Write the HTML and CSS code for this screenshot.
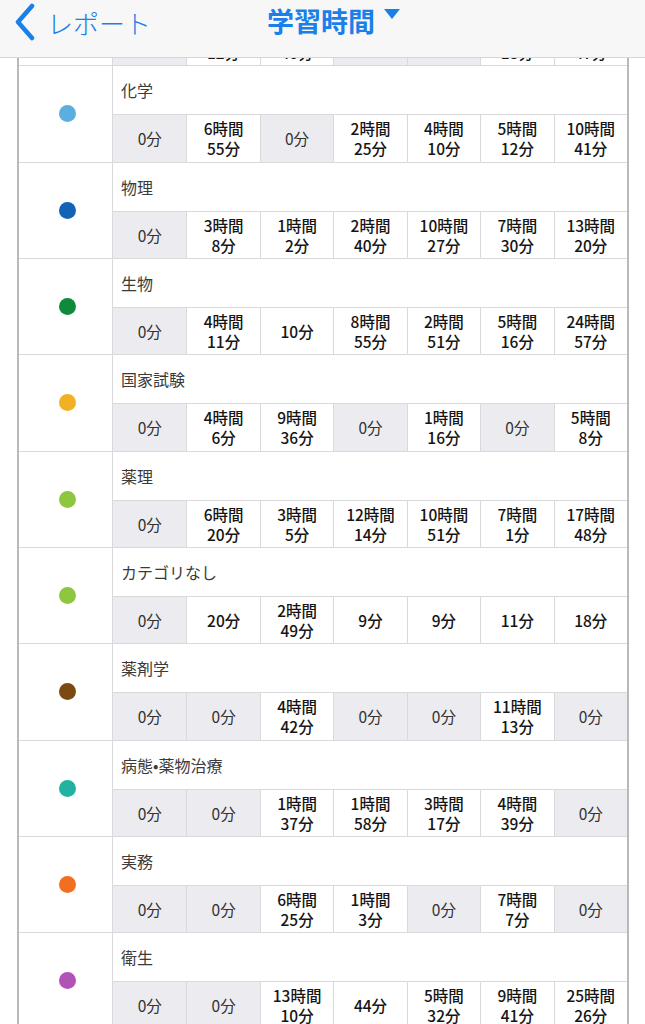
FILE: index.html
```html
<!DOCTYPE html>
<html lang="ja">
<head>
<meta charset="UTF-8" />
<meta name="viewport" content="width=device-width, initial-scale=1" />
<title>学習時間</title>
<link rel="stylesheet" href="styles.css">
</head>
<body>
  <header class="nav">
    <a class="back" href="#">
      <svg class="chevron" viewBox="0 0 22 38" width="22" height="38"><path d="M18 3 L4 19 L18 35" fill="none" stroke="#1a7fe8" stroke-width="4.5" stroke-linecap="round" stroke-linejoin="round"/></svg>
      <span>レポート</span>
    </a>
    <div class="title">学習時間<span class="caret"></span></div>
  </header>

  <div class="report">

    <!-- row scrolled up under the bar -->
    <div class="subject">
      <div class="swatch"></div>
      <div class="detail">
        <div class="name"></div>
        <div class="cells">
          <div class="cell zero"></div>
          <div class="cell">3時間<br>12分</div>
          <div class="cell">1時間<br>40分</div>
          <div class="cell zero"></div>
          <div class="cell zero"></div>
          <div class="cell">2時間<br>18分</div>
          <div class="cell">6時間<br>47分</div>
        </div>
      </div>
    </div>

    <div class="subject">
      <div class="swatch"><span class="dot" style="background:#5aafe0"></span></div>
      <div class="detail">
        <div class="name">化学</div>
        <div class="cells">
          <div class="cell zero">0分</div>
          <div class="cell">6時間<br>55分</div>
          <div class="cell zero">0分</div>
          <div class="cell">2時間<br>25分</div>
          <div class="cell">4時間<br>10分</div>
          <div class="cell">5時間<br>12分</div>
          <div class="cell">10時間<br>41分</div>
        </div>
      </div>
    </div>

    <div class="subject">
      <div class="swatch"><span class="dot" style="background:#1262b5"></span></div>
      <div class="detail">
        <div class="name">物理</div>
        <div class="cells">
          <div class="cell zero">0分</div>
          <div class="cell">3時間<br>8分</div>
          <div class="cell">1時間<br>2分</div>
          <div class="cell">2時間<br>40分</div>
          <div class="cell">10時間<br>27分</div>
          <div class="cell">7時間<br>30分</div>
          <div class="cell">13時間<br>20分</div>
        </div>
      </div>
    </div>

    <div class="subject">
      <div class="swatch"><span class="dot" style="background:#0f8a3c"></span></div>
      <div class="detail">
        <div class="name">生物</div>
        <div class="cells">
          <div class="cell zero">0分</div>
          <div class="cell">4時間<br>11分</div>
          <div class="cell">10分</div>
          <div class="cell">8時間<br>55分</div>
          <div class="cell">2時間<br>51分</div>
          <div class="cell">5時間<br>16分</div>
          <div class="cell">24時間<br>57分</div>
        </div>
      </div>
    </div>

    <div class="subject">
      <div class="swatch"><span class="dot" style="background:#f2b124"></span></div>
      <div class="detail">
        <div class="name">国家試験</div>
        <div class="cells">
          <div class="cell zero">0分</div>
          <div class="cell">4時間<br>6分</div>
          <div class="cell">9時間<br>36分</div>
          <div class="cell zero">0分</div>
          <div class="cell">1時間<br>16分</div>
          <div class="cell zero">0分</div>
          <div class="cell">5時間<br>8分</div>
        </div>
      </div>
    </div>

    <div class="subject">
      <div class="swatch"><span class="dot" style="background:#8dc63f"></span></div>
      <div class="detail">
        <div class="name">薬理</div>
        <div class="cells">
          <div class="cell zero">0分</div>
          <div class="cell">6時間<br>20分</div>
          <div class="cell">3時間<br>5分</div>
          <div class="cell">12時間<br>14分</div>
          <div class="cell">10時間<br>51分</div>
          <div class="cell">7時間<br>1分</div>
          <div class="cell">17時間<br>48分</div>
        </div>
      </div>
    </div>

    <div class="subject">
      <div class="swatch"><span class="dot" style="background:#8dc63f"></span></div>
      <div class="detail">
        <div class="name">カテゴリなし</div>
        <div class="cells">
          <div class="cell zero">0分</div>
          <div class="cell">20分</div>
          <div class="cell">2時間<br>49分</div>
          <div class="cell">9分</div>
          <div class="cell">9分</div>
          <div class="cell">11分</div>
          <div class="cell">18分</div>
        </div>
      </div>
    </div>

    <div class="subject">
      <div class="swatch"><span class="dot" style="background:#7b4a12"></span></div>
      <div class="detail">
        <div class="name">薬剤学</div>
        <div class="cells">
          <div class="cell zero">0分</div>
          <div class="cell zero">0分</div>
          <div class="cell">4時間<br>42分</div>
          <div class="cell zero">0分</div>
          <div class="cell zero">0分</div>
          <div class="cell">11時間<br>13分</div>
          <div class="cell zero">0分</div>
        </div>
      </div>
    </div>

    <div class="subject">
      <div class="swatch"><span class="dot" style="background:#22b3a0"></span></div>
      <div class="detail">
        <div class="name">病態•薬物治療</div>
        <div class="cells">
          <div class="cell zero">0分</div>
          <div class="cell zero">0分</div>
          <div class="cell">1時間<br>37分</div>
          <div class="cell">1時間<br>58分</div>
          <div class="cell">3時間<br>17分</div>
          <div class="cell">4時間<br>39分</div>
          <div class="cell zero">0分</div>
        </div>
      </div>
    </div>

    <div class="subject">
      <div class="swatch"><span class="dot" style="background:#f26f21"></span></div>
      <div class="detail">
        <div class="name">実務</div>
        <div class="cells">
          <div class="cell zero">0分</div>
          <div class="cell zero">0分</div>
          <div class="cell">6時間<br>25分</div>
          <div class="cell">1時間<br>3分</div>
          <div class="cell zero">0分</div>
          <div class="cell">7時間<br>7分</div>
          <div class="cell zero">0分</div>
        </div>
      </div>
    </div>

    <div class="subject">
      <div class="swatch"><span class="dot" style="background:#b152b6"></span></div>
      <div class="detail">
        <div class="name">衛生</div>
        <div class="cells">
          <div class="cell zero">0分</div>
          <div class="cell zero">0分</div>
          <div class="cell">13時間<br>10分</div>
          <div class="cell">44分</div>
          <div class="cell">5時間<br>32分</div>
          <div class="cell">9時間<br>41分</div>
          <div class="cell">25時間<br>26分</div>
        </div>
      </div>
    </div>

  </div>
</body>
</html>
```

FILE: styles.css
```css
body {
  margin: 0;
  background: #fff;
  font-family: "Noto Sans CJK JP", "Noto Sans", sans-serif;
  color: #222;
}

/* top navigation bar */
.nav {
  position: sticky;
  top: 0;
  z-index: 5;
  height: 57px;
  background: #f7f7f8;
  border-bottom: 1px solid #d6d6d8;
  display: flex;
  align-items: center;
  justify-content: center;
}

.back {
  position: absolute;
  left: 14px;
  top: 3px;
  display: flex;
  align-items: center;
  gap: 11px;
  color: #1a7fe8;
  text-decoration: none;
  font-size: 26px;
  font-weight: 300;
  height: 38px;
}

.title {
  display: flex;
  align-items: center;
  margin-top: -16px;
  margin-left: 22px;
  color: #1a7fe8;
  font-size: 27px;
  font-weight: 700;
}

.caret {
  width: 0;
  height: 0;
  margin-left: 9px;
  margin-top: -14px;
  border-left: 8px solid transparent;
  border-right: 8px solid transparent;
  border-top: 10px solid #1a7fe8;
}

/* subject table */
.report {
  margin: -88px 0 0 17px;
  width: 608px;
  border-left: 2px solid #b9b9bb;
  border-right: 2px solid #b9b9bb;
}

.subject {
  display: flex;
  border-bottom: 1px solid #d9d9dc;
}

.swatch {
  width: 93px;
  display: flex;
  align-items: center;
  justify-content: center;
  border-right: 1px solid #d9d9dc;
}

.dot {
  width: 17px;
  height: 17px;
  border-radius: 50%;
  margin-left: 3px;
}

.detail {
  flex: 1;
}

.name {
  height: 48px;
  padding-left: 8px;
  display: flex;
  align-items: center;
  font-size: 16px;
  color: #3a3a3a;
}

.cells {
  display: grid;
  grid-template-columns: repeat(7, 1fr);
  height: 46.33px;
  border-top: 1px solid #d9d9dc;
}

.cell {
  display: flex;
  align-items: center;
  justify-content: center;
  text-align: center;
  font-size: 15.5px;
  line-height: 20px;
  font-weight: 500;
  color: #151515;
  border-left: 1px solid #d9d9dc;
}

.cell:first-child {
  border-left: none;
}

.cell.zero {
  background: #ececf0;
  font-weight: 400;
  color: #333;
}
```
